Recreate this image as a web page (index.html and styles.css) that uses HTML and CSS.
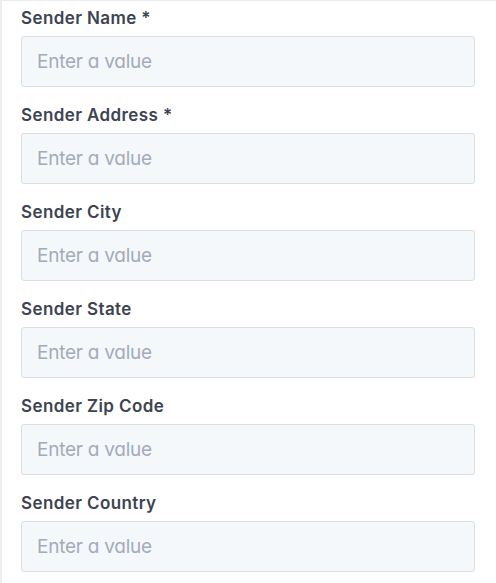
FILE: index.html
```html
<!DOCTYPE html>
<html lang="en">
<head>
    <meta charset="UTF-8">
    <meta name="viewport" content="width=device-width, initial-scale=1.0">
    <title>Sender details</title>
    <link rel="stylesheet" href="styles.css">
</head>
<body>
    <div class="panel">
        <form class="sender-form">
            <div class="field">
                <label for="senderName">Sender Name *</label>
                <input type="text" id="senderName" placeholder="Enter a value">
            </div>
            <div class="field">
                <label for="senderAddress">Sender Address *</label>
                <input type="text" id="senderAddress" placeholder="Enter a value">
            </div>
            <div class="field">
                <label for="senderCity">Sender City</label>
                <input type="text" id="senderCity" placeholder="Enter a value">
            </div>
            <div class="field">
                <label for="senderState">Sender State</label>
                <input type="text" id="senderState" placeholder="Enter a value">
            </div>
            <div class="field">
                <label for="senderZip">Sender Zip Code</label>
                <input type="text" id="senderZip" placeholder="Enter a value">
            </div>
            <div class="field">
                <label for="senderCountry">Sender Country</label>
                <input type="text" id="senderCountry" placeholder="Enter a value">
            </div>
        </form>
    </div>
</body>
</html>
```

FILE: styles.css
```css
:root {
    --text: #3d4451;
    --placeholder: #a3abbb;
    --field-bg: #f5f8fa;
    --field-border: #d9dee7;
    --panel-border: #ebedf0;
}

* {
    margin: 0;
    padding: 0;
    box-sizing: border-box;
}

body {
    background: #ffffff;
    font-family: Inter, "Noto Sans", sans-serif;
    color: var(--text);
}

.panel {
    border-top: 1px solid var(--panel-border);
    border-left: 2px solid var(--panel-border);
    padding: 5px 21px 0 19px;
    min-height: 583px;
}

.field {
    display: flex;
    flex-direction: column;
    margin-bottom: 16px;
}

.field label {
    font-size: 17px;
    line-height: 24px;
    font-weight: 600;
    letter-spacing: 0.4px;
    margin-bottom: 6px;
}

.field input {
    height: 51px;
    width: 100%;
    padding: 0 15px;
    border: 1px solid var(--field-border);
    border-radius: 3px;
    background: var(--field-bg);
    font-family: Inter, "Noto Sans", sans-serif;
    font-feature-settings: "cv11";
    font-size: 19px;
    letter-spacing: -0.25px;
    color: var(--text);
    outline: none;
}

.field input::placeholder {
    color: var(--placeholder);
}
```
